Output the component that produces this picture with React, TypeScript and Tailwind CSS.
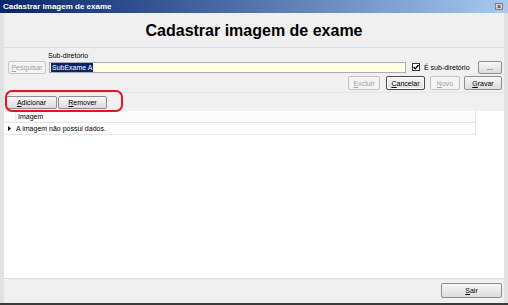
import React from "react";

type BtnProps = {
  label: string;
  u: string;
  rest: string;
  w: string;
  disabled?: boolean;
  focused?: boolean;
  h?: string;
};

const Btn = ({ u, rest, w, disabled, focused, h = "h-[14px]" }: BtnProps) => {
  const base = "flex items-center justify-center rounded-[2px] border text-[7px] leading-none";
  const look = disabled
    ? "border-[#c4c6c8] bg-[#f4f4f4] text-[#a3a3a3]"
    : focused
    ? "border-[#4a4a4a] bg-linear-to-b from-[#f7f7f7] to-[#dedede] text-black shadow-[inset_0_0_0_1px_#ffffff]"
    : "border-[#8c8e90] bg-linear-to-b from-[#f7f7f7] to-[#dcdcdc] text-black";
  return (
    <div className={`${base} ${look} ${w} ${h}`}>
      <span>
        <span className="underline">{u}</span>
        {rest}
      </span>
    </div>
  );
};

const App = () => {
  return (
    <div className="w-[508px] h-[305px] bg-[#f0f0f0] flex flex-col overflow-hidden font-['Liberation_Sans',Arial,sans-serif] border-b-2 border-[#3a3a3a]">
      {/* title bar */}
      <div className="h-[13px] shrink-0 flex items-center justify-between bg-linear-to-r from-[#0a246a] to-[#a6caf0] pl-[3px]">
        <span className="text-white font-bold text-[8px] leading-none">Cadastrar imagem de exame</span>
        <div className="mr-[5px] w-[8px] h-[7px] bg-[#d4d0c8] border border-[#808080] flex items-center justify-center text-[7px] leading-none text-black">
          ×
        </div>
      </div>

      <div className="flex-1 flex flex-col border-l-[4px] border-r-[4px] border-[#e2e2e2]">
        {/* header */}
        <div className="h-[35px] shrink-0 flex items-center justify-center border-b border-[#d9e2ea]">
          <h1 className="text-[16px] font-bold text-black leading-none pt-[2px]">Cadastrar imagem de exame</h1>
        </div>

        {/* form */}
        <div className="h-[45px] shrink-0 flex flex-col pt-[4px] border-b border-[#dfe5ea] pr-[2px]">
          <div className="h-[8px] pl-[44px] text-[7px] leading-[8px] text-black">Sub-diretório</div>
          <div className="h-[14px] flex items-center">
            <div className="ml-[4px]">
              <Btn label="Pesquisar" u="P" rest="esquisar" w="w-[38px]" h="h-[13px]" disabled />
            </div>
            <div className="ml-[3px] w-[357px] h-[11px] bg-[#ffffe1] border border-[#a5acb5] flex items-center pl-[1px]">
              <span className="bg-[#0a246a] text-white text-[7px] leading-[9px] px-[1px]">SubExame A</span>
            </div>
            <div className="ml-[6px] w-[8px] h-[8px] bg-white border border-[#333] flex items-center justify-center">
              <svg width="6" height="6" viewBox="0 0 6 6">
                <path d="M0.5 3 L2.3 4.8 L5.5 1" stroke="#000" strokeWidth="1.3" fill="none" />
              </svg>
            </div>
            <span className="ml-[4px] text-[7px] leading-none text-black">É sub-diretório</span>
            <div className="ml-auto">
              <Btn label="..." u="" rest="..." w="w-[24px]" h="h-[13px]" />
            </div>
          </div>
          <div className="mt-[2px] h-[14px] flex items-center justify-end">
            <Btn label="Excluir" u="E" rest="xcluir" w="w-[32px]" disabled />
            <div className="ml-[6px]">
              <Btn label="Cancelar" u="C" rest="ancelar" w="w-[39px]" focused />
            </div>
            <div className="ml-[5px]">
              <Btn label="Novo" u="N" rest="ovo" w="w-[30px]" disabled />
            </div>
            <div className="ml-[4px]">
              <Btn label="Gravar" u="G" rest="ravar" w="w-[38px]" />
            </div>
          </div>
        </div>

        {/* toolbar */}
        <div className="h-[18px] shrink-0 relative flex items-center pl-[2px]">
          <Btn label="Adicionar" u="A" rest="dicionar" w="w-[51px]" h="h-[13px]" />
          <div className="ml-[1px]">
            <Btn label="Remover" u="R" rest="emover" w="w-[49px]" h="h-[13px]" />
          </div>
          <div className="absolute left-[1px] top-[-3px] w-[118px] h-[22px] border-2 border-[#e8141c] rounded-[7px]" />
        </div>

        {/* grid */}
        <div className="flex-1 bg-white">
          <div className="w-[472px] border-r border-[#e4e4e4]">
            <div className="h-[12px] flex border-b border-[#e6e6e6] bg-[#fbfbfb]">
              <div className="w-[11px]" />
              <div className="flex-1 border-l border-[#ececec] pl-[2px] flex items-center text-[7px] leading-none text-black">
                Imagem
              </div>
            </div>
            <div className="h-[12px] flex border-b border-[#e6e6e6]">
              <div className="w-[11px] flex items-center pl-[4px]">
                <svg width="3" height="5" viewBox="0 0 3 5">
                  <path d="M0 0 L3 2.5 L0 5 Z" fill="#000" />
                </svg>
              </div>
              <div className="flex-1 pl-[1px] flex items-center text-[7px] leading-none text-black">
                A imagem não possui dados.
              </div>
            </div>
          </div>
        </div>

        {/* bottom */}
        <div className="h-[25px] shrink-0 border-t border-[#d6dde4] flex items-start justify-end pt-[4px] pr-[2px]">
          <Btn label="Sair" u="S" rest="air" w="w-[61px]" h="h-[15px]" />
        </div>
      </div>
    </div>
  );
};

export default App;
